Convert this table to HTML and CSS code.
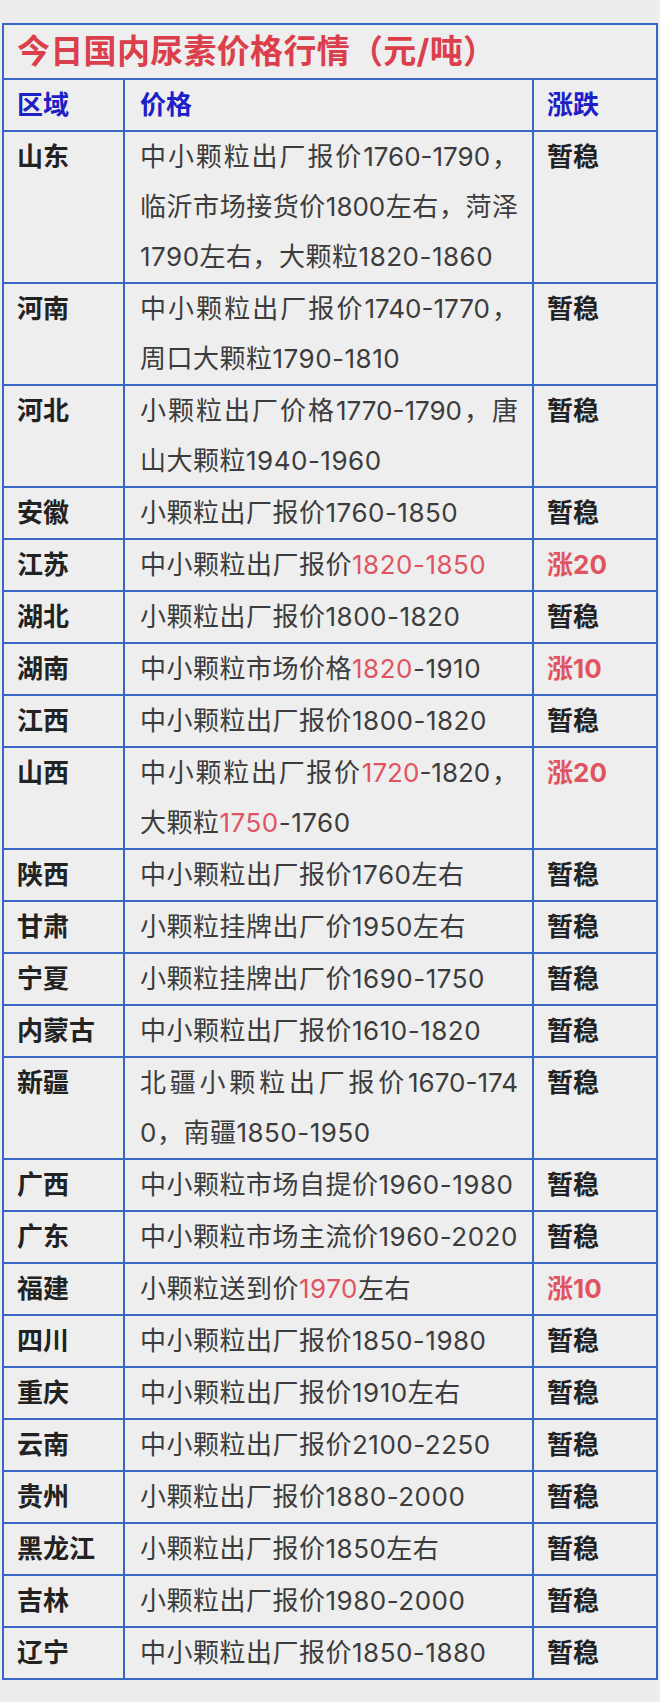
FILE: index.html
```html
<!DOCTYPE html>
<html lang="zh-CN">
<head>
<meta charset="utf-8">
<title>今日国内尿素价格行情</title>
<link rel="stylesheet" href="styles.css">
</head>
<body>
<div class="page">
<table class="price-table">
  <colgroup>
    <col class="c-region">
    <col class="c-price">
    <col class="c-change">
  </colgroup>
  <thead>
    <tr><th class="title" colspan="3">今日国内尿素价格行情（元/吨）</th></tr>
    <tr class="head"><th>区域</th><th>价格</th><th>涨跌</th></tr>
  </thead>
  <tbody>
    <tr><td class="region">山东</td><td class="price"><span class="jl">中小颗粒出厂报价1760-1790，</span><span class="jl">临沂市场接货价1800左右，菏泽</span><span class="ln">1790左右，大颗粒1820-1860</span></td><td class="chg">暂稳</td></tr>
    <tr><td class="region">河南</td><td class="price"><span class="jl">中小颗粒出厂报价1740-1770，</span><span class="ln">周口大颗粒1790-1810</span></td><td class="chg">暂稳</td></tr>
    <tr><td class="region">河北</td><td class="price"><span class="jl">小颗粒出厂价格1770-1790，唐</span><span class="ln">山大颗粒1940-1960</span></td><td class="chg">暂稳</td></tr>
    <tr><td class="region">安徽</td><td class="price">小颗粒出厂报价1760-1850</td><td class="chg">暂稳</td></tr>
    <tr><td class="region">江苏</td><td class="price">中小颗粒出厂报价<span class="up">1820-1850</span></td><td class="chg up-b">涨20</td></tr>
    <tr><td class="region">湖北</td><td class="price">小颗粒出厂报价1800-1820</td><td class="chg">暂稳</td></tr>
    <tr><td class="region">湖南</td><td class="price">中小颗粒市场价格<span class="up">1820</span>-1910</td><td class="chg up-b">涨10</td></tr>
    <tr><td class="region">江西</td><td class="price">中小颗粒出厂报价1800-1820</td><td class="chg">暂稳</td></tr>
    <tr><td class="region">山西</td><td class="price"><span class="jl">中小颗粒出厂报价<span class="up">1720</span>-1820，</span><span class="ln">大颗粒<span class="up">1750</span>-1760</span></td><td class="chg up-b">涨20</td></tr>
    <tr><td class="region">陕西</td><td class="price">中小颗粒出厂报价1760左右</td><td class="chg">暂稳</td></tr>
    <tr><td class="region">甘肃</td><td class="price">小颗粒挂牌出厂价1950左右</td><td class="chg">暂稳</td></tr>
    <tr><td class="region">宁夏</td><td class="price">小颗粒挂牌出厂价1690-1750</td><td class="chg">暂稳</td></tr>
    <tr><td class="region">内蒙古</td><td class="price">中小颗粒出厂报价1610-1820</td><td class="chg">暂稳</td></tr>
    <tr><td class="region">新疆</td><td class="price"><span class="jl">北疆小颗粒出厂报价1670-174</span><span class="ln">0，南疆1850-1950</span></td><td class="chg">暂稳</td></tr>
    <tr><td class="region">广西</td><td class="price">中小颗粒市场自提价1960-1980</td><td class="chg">暂稳</td></tr>
    <tr><td class="region">广东</td><td class="price">中小颗粒市场主流价1960-2020</td><td class="chg">暂稳</td></tr>
    <tr><td class="region">福建</td><td class="price">小颗粒送到价<span class="up">1970</span>左右</td><td class="chg up-b">涨10</td></tr>
    <tr><td class="region">四川</td><td class="price">中小颗粒出厂报价1850-1980</td><td class="chg">暂稳</td></tr>
    <tr><td class="region">重庆</td><td class="price">中小颗粒出厂报价1910左右</td><td class="chg">暂稳</td></tr>
    <tr><td class="region">云南</td><td class="price">中小颗粒出厂报价2100-2250</td><td class="chg">暂稳</td></tr>
    <tr><td class="region">贵州</td><td class="price">小颗粒出厂报价1880-2000</td><td class="chg">暂稳</td></tr>
    <tr><td class="region">黑龙江</td><td class="price">小颗粒出厂报价1850左右</td><td class="chg">暂稳</td></tr>
    <tr><td class="region">吉林</td><td class="price">小颗粒出厂报价1980-2000</td><td class="chg">暂稳</td></tr>
    <tr><td class="region">辽宁</td><td class="price">中小颗粒出厂报价1850-1880</td><td class="chg">暂稳</td></tr>
  </tbody>
</table>
</div>
</body>
</html>
```

FILE: styles.css
```css
html, body {
  margin: 0;
  padding: 0;
  background: #ededed;
}

.page {
  padding: 23px 0 0 2px;
  font-family: Inter, "Noto Sans CJK SC", sans-serif;
}

.price-table {
  border-collapse: separate;
  border-spacing: 0;
  width: 656px;
  table-layout: fixed;
  border-top: 2px solid #3a66c6;
  border-left: 2px solid #3a66c6;
  background: #eeeeee;
}

.c-region { width: 121px; }
.c-price { width: 409px; }
.c-change { width: 124px; }

.price-table th,
.price-table td {
  border-right: 2px solid #3a66c6;
  border-bottom: 2px solid #3a66c6;
  padding: 0 0 0 13px;
  vertical-align: top;
  text-align: left;
}

.title {
  font-size: 33px;
  font-weight: 700;
  color: #db3f4c;
  line-height: 53px;
  height: 53px;
  padding-left: 13px;
  letter-spacing: 0.3px;
}

.head th {
  font-size: 26px;
  font-weight: 700;
  color: #1c20c6;
  line-height: 50px;
}

.head th:nth-child(2) { padding-left: 15px; }

.region {
  font-size: 26px;
  font-weight: 700;
  color: #222222;
  line-height: 50px;
  white-space: nowrap;
}

.price-table td.price {
  font-size: 26px;
  font-weight: 400;
  color: #3c3c3c;
  line-height: 50px;
  padding-left: 15px;
  padding-right: 14px;
  letter-spacing: 0.5px;
}

.jl {
  display: block;
  text-align: justify;
  text-align-last: justify;
  white-space: nowrap;
  letter-spacing: 0;
}

.ln {
  display: block;
  white-space: nowrap;
}

.up {
  color: #e05462;
}

.chg {
  font-size: 26px;
  font-weight: 700;
  color: #222222;
  line-height: 50px;
}

.chg.up-b {
  color: #e05462;
}
```
